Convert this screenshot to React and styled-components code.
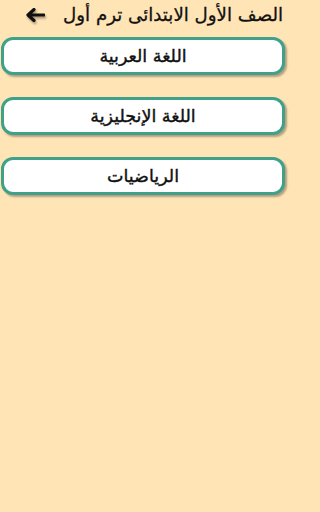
import React from "react";
import styled, { createGlobalStyle } from "styled-components";

const GlobalStyle = createGlobalStyle`
  html, body {
    margin: 0;
    padding: 0;
    background: #ffe4b5;
  }
  body {
    font-family: "DejaVu Sans", "Noto Sans", sans-serif;
  }
`;

const Page = styled.div`
  width: 288px;
  min-height: 512px;
  background: #ffe4b5;
  direction: rtl;
`;

// شريط العنوان
const Header = styled.header`
  height: 30px;
  display: flex;
  align-items: center;
  justify-content: space-between;
  padding: 0 5px 0 25px;
`;

const Title = styled.h1`
  margin: 0 0 2px;
  font-size: 18.2px;
  font-weight: normal;
  color: #111;
  white-space: nowrap;
  -webkit-text-stroke: 0.3px #111;
`;

const BackButton = styled.button`
  border: none;
  background: none;
  padding: 0;
  display: flex;
  align-items: center;
  filter: drop-shadow(1px 2px 1px rgba(0, 0, 0, 0.35));
`;

const SubjectList = styled.div`
  display: flex;
  flex-direction: column;
  gap: 22px;
  padding: 7px 3px 0 1px;
`;

const SubjectButton = styled.button`
  height: 38px;
  box-sizing: border-box;
  border: 3px solid #3fa18a;
  border-radius: 12px;
  background: #fff;
  box-shadow: 2px 2px 2px rgba(0, 0, 0, 0.3);
  font-family: inherit;
  font-size: 17.5px;
  font-weight: normal;
  -webkit-text-stroke: 0.4px #111;
  color: #111;
  direction: rtl;
`;

const subjects = ["اللغة العربية", "اللغة الإنجليزية", "الرياضيات"];

const ArrowIcon = () => (
  <svg width="20" height="14" viewBox="0 0 20 14">
    <path d="M19 7H4M9 1.5L3 7l6 5.5" fill="none" stroke="#111" strokeWidth="3.2" strokeLinecap="round" strokeLinejoin="round" />
  </svg>
);

const App = () => (
  <>
    <GlobalStyle />
    <Page>
      <Header>
        <Title>الصف الأول الابتدائى ترم أول</Title>
        <BackButton>
          <ArrowIcon />
        </BackButton>
      </Header>
      <SubjectList>
        {subjects.map((s) => (
          <SubjectButton key={s}>{s}</SubjectButton>
        ))}
      </SubjectList>
    </Page>
  </>
);

export default App;
